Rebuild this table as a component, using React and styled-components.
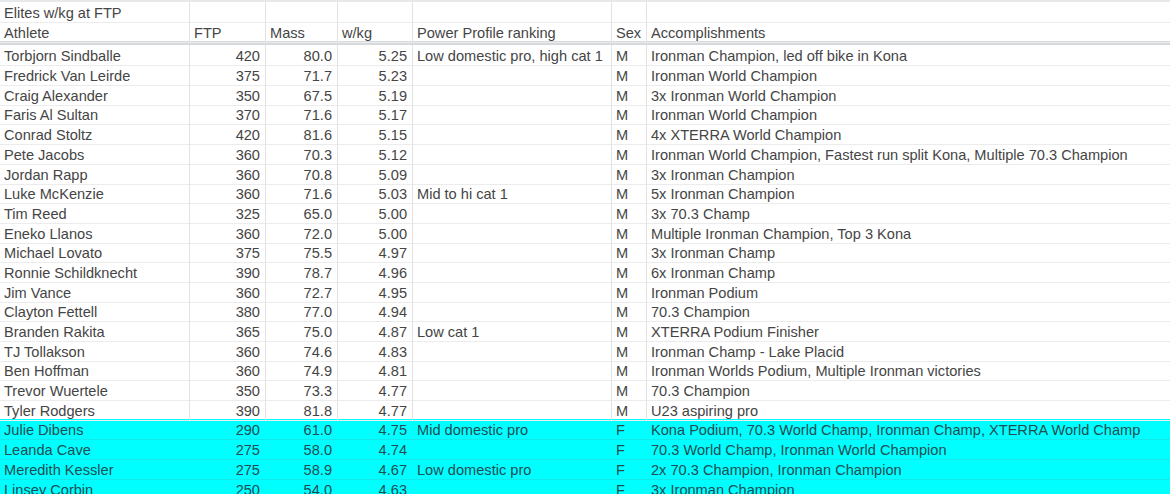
import styled, { createGlobalStyle } from "styled-components";

const GlobalStyle = createGlobalStyle`
  html, body {
    margin: 0;
    padding: 0;
    background: #fff;
    overflow: hidden;
  }
  body {
    font-family: "Liberation Sans", Arial, sans-serif;
  }
`;

const athletes = [
  ["Torbjorn Sindballe", 420, "80.0", "5.25", "Low domestic pro, high cat 1", "M", "Ironman Champion, led off bike in Kona"],
  ["Fredrick Van Leirde", 375, "71.7", "5.23", "", "M", "Ironman World Champion"],
  ["Craig Alexander", 350, "67.5", "5.19", "", "M", "3x Ironman World Champion"],
  ["Faris Al Sultan", 370, "71.6", "5.17", "", "M", "Ironman World Champion"],
  ["Conrad Stoltz", 420, "81.6", "5.15", "", "M", "4x XTERRA World Champion"],
  ["Pete Jacobs", 360, "70.3", "5.12", "", "M", "Ironman World Champion, Fastest run split Kona, Multiple 70.3 Champion"],
  ["Jordan Rapp", 360, "70.8", "5.09", "", "M", "3x Ironman Champion"],
  ["Luke McKenzie", 360, "71.6", "5.03", "Mid to hi cat 1", "M", "5x Ironman Champion"],
  ["Tim Reed", 325, "65.0", "5.00", "", "M", "3x 70.3 Champ"],
  ["Eneko Llanos", 360, "72.0", "5.00", "", "M", "Multiple Ironman Champion, Top 3 Kona"],
  ["Michael Lovato", 375, "75.5", "4.97", "", "M", "3x Ironman Champ"],
  ["Ronnie Schildknecht", 390, "78.7", "4.96", "", "M", "6x Ironman Champ"],
  ["Jim Vance", 360, "72.7", "4.95", "", "M", "Ironman Podium"],
  ["Clayton Fettell", 380, "77.0", "4.94", "", "M", "70.3 Champion"],
  ["Branden Rakita", 365, "75.0", "4.87", "Low cat 1", "M", "XTERRA Podium Finisher"],
  ["TJ Tollakson", 360, "74.6", "4.83", "", "M", "Ironman Champ - Lake Placid"],
  ["Ben Hoffman", 360, "74.9", "4.81", "", "M", "Ironman Worlds Podium, Multiple Ironman victories"],
  ["Trevor Wuertele", 350, "73.3", "4.77", "", "M", "70.3 Champion"],
  ["Tyler Rodgers", 390, "81.8", "4.77", "", "M", "U23 aspiring pro"],
  ["Julie Dibens", 290, "61.0", "4.75", "Mid domestic pro", "F", "Kona Podium, 70.3 World Champ, Ironman Champ, XTERRA World Champ"],
  ["Leanda Cave", 275, "58.0", "4.74", "", "F", "70.3 World Champ, Ironman World Champion"],
  ["Meredith Kessler", 275, "58.9", "4.67", "Low domestic pro", "F", "2x 70.3 Champion, Ironman Champion"],
  ["Linsey Corbin", 250, "54.0", "4.63", "", "F", "3x Ironman Champion"],
];

const Sheet = styled.div`
  width: 1170px;
  height: 494px;
  overflow: hidden;
  border-top: 2px solid #e6e8ea;
  box-sizing: border-box;
`;

const Row = styled.div`
  display: grid;
  grid-template-columns: 190px 76px 72px 75px 199px 35px 1fr;
  height: 19.7px;
  background: ${(p) => (p.$highlight ? "#00ffff" : "#fff")};
  border-bottom: ${(p) => (p.$frozen ? "4px solid #d6dadd" : "none")};
`;

const Cell = styled.div`
  box-sizing: border-box;
  padding: 2px ${(p) => (p.$num ? "5px" : "3px")} 0 ${(p) => (p.$num ? "0" : "4px")};
  text-align: ${(p) => (p.$num ? "right" : "left")};
  font-size: 14.6px;
  line-height: 18px;
  color: ${(p) => (p.$highlight ? "#1f4d52" : "#454545")};
  white-space: nowrap;
  overflow: visible;
  border-right: 1px solid ${(p) => (p.$highlight ? "transparent" : "#e2e2e2")};
  border-bottom: 1px solid ${(p) => (p.$highlight ? "#14e8ea" : "#ececec")};
  &:last-child {
    border-right: none;
  }
`;

const numCols = [1, 2, 3];

const isNum = (i, c) => numCols.includes(i) && /^[\d.]+$/.test(String(c));

const SheetRow = ({ cells, highlight, frozen }) => (
  <Row $highlight={highlight} $frozen={frozen}>
    {cells.map((c, i) => (
      <Cell key={i} $num={isNum(i, c)} $highlight={highlight}>
        {c}
      </Cell>
    ))}
  </Row>
);

const App = () => {
  return (
    <>
      <GlobalStyle />
      <Sheet>
        <SheetRow cells={["Elites w/kg at FTP", "", "", "", "", "", ""]} />
        <SheetRow
          frozen
          cells={["Athlete", "FTP", "Mass", "w/kg", "Power Profile ranking", "Sex", "Accomplishments"]}
        />
        {athletes.map((a) => (
          <SheetRow key={a[0]} cells={a} highlight={a[5] === "F"} />
        ))}
      </Sheet>
    </>
  );
};

export default App;
